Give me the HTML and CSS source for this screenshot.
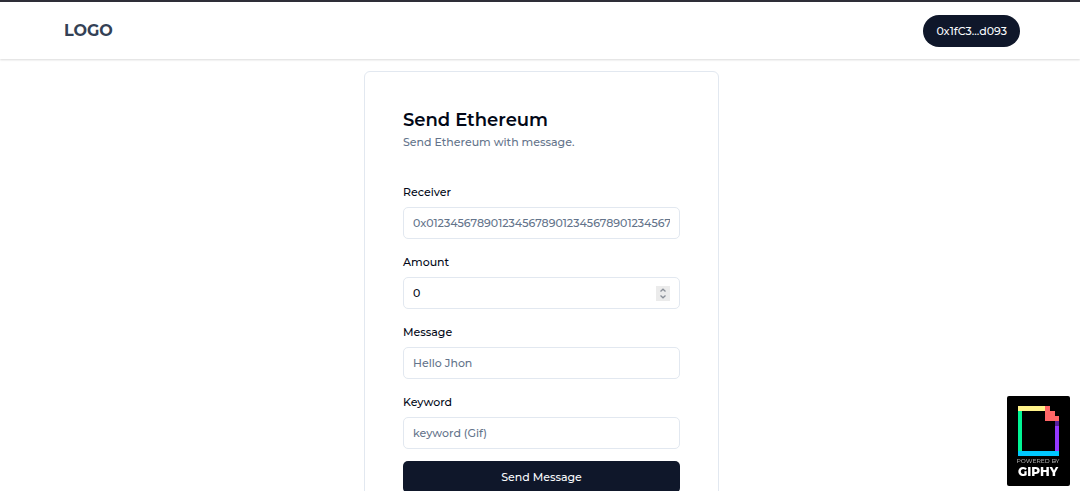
FILE: index.html
```
<!DOCTYPE html>
<html lang="en">
<head>
    <meta charset="UTF-8">
    <meta name="viewport" content="width=device-width, initial-scale=1.0">
    <title>Send Ethereum</title>
    <link rel="stylesheet" href="styles.css">
</head>
<body>
    <header class="navbar">
        <a class="logo" href="#">LOGO</a>
        <button class="wallet" type="button">0x1fC3...d093</button>
    </header>

    <main>
        <form class="card">
            <h1>Send Ethereum</h1>
            <p class="subtitle">Send Ethereum with message.</p>

            <div class="field">
                <label for="receiver">Receiver</label>
                <input type="text" id="receiver" placeholder="0x0123456789012345678901234567890123456789">
            </div>
            <div class="field">
                <label for="amount">Amount</label>
                <input type="number" id="amount" value="0">
            </div>
            <div class="field">
                <label for="message">Message</label>
                <input type="text" id="message" placeholder="Hello Jhon">
            </div>
            <div class="field">
                <label for="keyword">Keyword</label>
                <input type="text" id="keyword" placeholder="keyword (Gif)">
            </div>
            <button class="send" type="button">Send Message</button>
        </form>
    </main>

    <svg class="giphy" viewBox="0 0 63 90" role="img" aria-label="Powered by Giphy">
        <rect width="63" height="90" rx="2" fill="#000"/>
        <path d="M11 10h27v5H11z" fill="#fff28a"/>
        <path d="M11 15h4v40h-4z" fill="#00f594"/>
        <path d="M11 55h41v5H11z" fill="#00c8ff"/>
        <path d="M48 25h4v30h-4z" fill="#9437ff"/>
        <path d="M48 25h4v5h-4z" fill="#56209b"/>
        <path d="M38 10h5v5h5v5h4v5H38z" fill="#ff6666"/>
        <text class="giphy-small" x="31" y="67">POWERED BY</text>
        <text class="giphy-name" x="31" y="80">GIPHY</text>
    </svg>
</body>
</html>
```
FILE: styles.css
```
* {
    box-sizing: border-box;
}

body {
    margin: 0;
    font-family: Montserrat, Inter, sans-serif;
    font-size: 11px;
    font-weight: 500;
    color: #020817;
    background-color: #fff;
}

button, input {
    font-family: inherit;
    font-size: 11px;
    font-weight: 500;
}

.navbar {
    display: flex;
    align-items: center;
    justify-content: space-between;
    height: 59px;
    padding: 0 60px 0 64px;
    border-top: 2px solid #2e2e38;
    box-shadow: 0 1px 2px rgba(0, 0, 0, 0.15);
}

.logo {
    font-size: 16px;
    font-weight: 700;
    color: #334155;
    text-decoration: none;
}

.wallet {
    height: 32px;
    padding: 0 13px;
    border: none;
    border-radius: 16px;
    background-color: #0f172a;
    color: #f8fafc;
    cursor: pointer;
}

main {
    padding: 12px 0 40px 3px;
}

.card {
    max-width: 355px;
    margin: 0 auto;
    padding: 36px 38px;
    border: 1px solid #e2e8f0;
    border-radius: 6px;
}

h1 {
    margin: 0;
    font-size: 18px;
    font-weight: 600;
    line-height: 24px;
}

.subtitle {
    margin: 2px 0 34px;
    line-height: 16px;
    color: #64748b;
}

.field {
    margin-bottom: 15px;
}

.field:last-of-type {
    margin-bottom: 12px;
}

label {
    display: block;
    margin-bottom: 7px;
    line-height: 16px;
}

input {
    display: block;
    width: 100%;
    height: 32px;
    padding: 0 9px;
    border: 1px solid #e2e8f0;
    border-radius: 5px;
    background-color: #fff;
    color: #020817;
}

input::placeholder {
    color: #64748b;
}

input::-webkit-inner-spin-button {
    -webkit-appearance: none;
    width: 14px;
    height: 15px;
    opacity: 1;
    background: #ebebeb url("data:image/svg+xml,%3Csvg xmlns='http://www.w3.org/2000/svg' width='14' height='15' fill='none' stroke='%238a8f98' stroke-width='1.3'%3E%3Cpath d='M4.5 5.5 7 3.2l2.5 2.3M4.5 9.5 7 11.8l2.5-2.3'/%3E%3C/svg%3E") no-repeat center;
}

.send {
    display: block;
    width: 100%;
    height: 32px;
    border: none;
    border-radius: 5px;
    background-color: #0f172a;
    color: #f8fafc;
    cursor: pointer;
}

.giphy {
    position: fixed;
    right: 10px;
    bottom: 5px;
    width: 63px;
    height: 90px;
}

.giphy text {
    text-anchor: middle;
}

.giphy-small {
    font-size: 6px;
    fill: #a6a6a6;
}

.giphy-name {
    font-size: 12px;
    font-weight: 800;
    fill: #fff;
}
```
